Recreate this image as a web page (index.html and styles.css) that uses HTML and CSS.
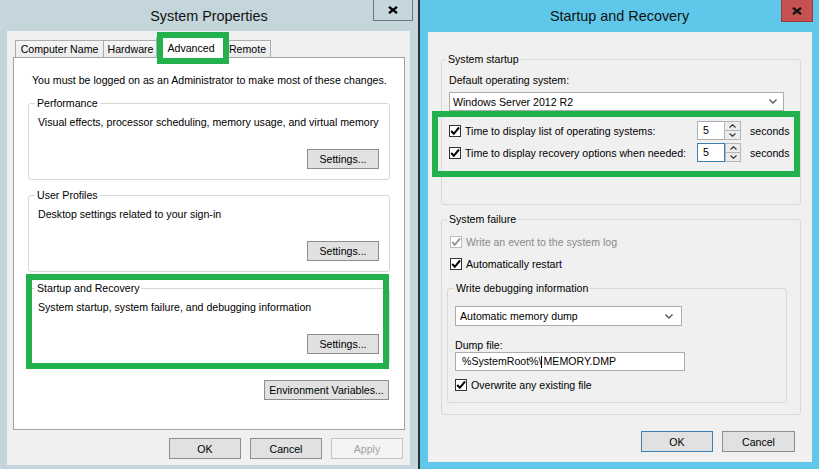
FILE: index.html
```html
<!DOCTYPE html>
<html lang="en">
<head>
<meta charset="utf-8">
<title>System Properties - Startup and Recovery</title>
<link rel="stylesheet" href="styles.css">
</head>
<body>
<div class="desktop">
  <section class="win win-sys">
    <header class="titlebar">
      <span class="title">System Properties</span>
      <span class="close close-sys"><svg width="10" height="8" viewBox="0 0 10 8"><path d="M1 0.8 L9 7.2 M9 0.8 L1 7.2" stroke="#000" stroke-width="2.2" fill="none"/></svg></span>
    </header>
    <div class="client client-sys">
      <div class="tabs">
        <span class="tab tab-cn">Computer Name</span>
        <span class="tab tab-hw">Hardware</span>
        <span class="tab tab-active">Advanced</span>
        <span class="tab tab-rm">Remote</span>
        <span class="hl hl-tab"></span>
      </div>
      <div class="panel">
        <p class="note">You must be logged on as an Administrator to make most of these changes.</p>
        <fieldset class="group">
          <legend>Performance</legend>
          <p class="desc">Visual effects, processor scheduling, memory usage, and virtual memory</p>
          <button class="btn btn-settings">Settings...</button>
        </fieldset>
        <fieldset class="group group-up">
          <legend>User Profiles</legend>
          <p class="desc">Desktop settings related to your sign-in</p>
          <button class="btn btn-settings">Settings...</button>
        </fieldset>
        <fieldset class="group group-sr">
          <legend>Startup and Recovery</legend>
          <p class="desc">System startup, system failure, and debugging information</p>
          <button class="btn btn-settings">Settings...</button>
        </fieldset>
        <button class="btn btn-env">Environment Variables...</button>
        <span class="hl hl-sr"></span>
      </div>
      <div class="actions actions-sys">
        <button class="btn">OK</button>
        <button class="btn">Cancel</button>
        <button class="btn" disabled>Apply</button>
      </div>
    </div>
  </section>

  <section class="win win-sr">
    <header class="titlebar titlebar-sr">
      <span class="title">Startup and Recovery</span>
      <span class="close close-sr"><svg width="10" height="8" viewBox="0 0 10 8"><path d="M1 0.8 L9 7.2 M9 0.8 L1 7.2" stroke="#111" stroke-width="2.2" fill="none"/></svg></span>
    </header>
    <div class="client client-sr">
      <fieldset class="group group-startup">
        <legend>System startup</legend>
        <div class="field-label">Default operating system:</div>
        <div class="select select-os"><span>Windows Server 2012 R2</span><svg class="chev" width="8" height="5" viewBox="0 0 8 5"><path d="M0.5 0.5 L4 4 L7.5 0.5" stroke="#555" stroke-width="1.4" fill="none"/></svg></div>
        <div class="spin-row spin-row-first">
          <span class="check"><span class="cb"><svg width="10" height="10" viewBox="0 0 10 10"><path d="M1.2 5 L3.8 7.8 L9 1.5" stroke="#000" stroke-width="2" fill="none"/></svg></span>Time to display list of operating systems:</span>
          <span class="spin"><span class="spin-input">5</span><span class="spin-btns"><span class="spin-btn"><svg width="7" height="4" viewBox="0 0 7 4"><path d="M0.5 3.5 L3.5 0.8 L6.5 3.5" stroke="#333" stroke-width="1.1" fill="none"/></svg></span><span class="spin-btn"><svg width="7" height="4" viewBox="0 0 7 4"><path d="M0.5 0.5 L3.5 3.2 L6.5 0.5" stroke="#333" stroke-width="1.1" fill="none"/></svg></span></span></span>
          <span class="unit">seconds</span>
        </div>
        <div class="spin-row">
          <span class="check"><span class="cb"><svg width="10" height="10" viewBox="0 0 10 10"><path d="M1.2 5 L3.8 7.8 L9 1.5" stroke="#000" stroke-width="2" fill="none"/></svg></span>Time to display recovery options when needed:</span>
          <span class="spin spin-focus"><span class="spin-input">5</span><span class="spin-btns"><span class="spin-btn"><svg width="7" height="4" viewBox="0 0 7 4"><path d="M0.5 3.5 L3.5 0.8 L6.5 3.5" stroke="#333" stroke-width="1.1" fill="none"/></svg></span><span class="spin-btn"><svg width="7" height="4" viewBox="0 0 7 4"><path d="M0.5 0.5 L3.5 3.2 L6.5 0.5" stroke="#333" stroke-width="1.1" fill="none"/></svg></span></span></span>
          <span class="unit">seconds</span>
        </div>
      </fieldset>

      <fieldset class="group group-failure">
        <legend>System failure</legend>
        <span class="check check-row disabled"><span class="cb"><svg width="10" height="10" viewBox="0 0 10 10"><path d="M1.2 5 L3.8 7.8 L9 1.5" stroke="#9a9a9a" stroke-width="2" fill="none"/></svg></span>Write an event to the system log</span>
        <span class="check check-row"><span class="cb"><svg width="10" height="10" viewBox="0 0 10 10"><path d="M1.2 5 L3.8 7.8 L9 1.5" stroke="#000" stroke-width="2" fill="none"/></svg></span>Automatically restart</span>
        <fieldset class="group group-debug">
          <legend>Write debugging information</legend>
          <div class="select select-dump"><span>Automatic memory dump</span><svg class="chev" width="8" height="5" viewBox="0 0 8 5"><path d="M0.5 0.5 L4 4 L7.5 0.5" stroke="#555" stroke-width="1.4" fill="none"/></svg></div>
          <div class="field-label field-dump">Dump file:</div>
          <div class="textbox">%SystemRoot%\<span class="caret"></span>MEMORY.DMP</div>
          <span class="check check-over"><span class="cb"><svg width="10" height="10" viewBox="0 0 10 10"><path d="M1.2 5 L3.8 7.8 L9 1.5" stroke="#000" stroke-width="2" fill="none"/></svg></span>Overwrite any existing file</span>
        </fieldset>
      </fieldset>

      <div class="actions actions-sr">
        <button class="btn btn-default">OK</button>
        <button class="btn btn-cancel">Cancel</button>
      </div>
      <span class="hl hl-startup"></span>
    </div>
  </section>
</div>
</body>
</html>
```

FILE: styles.css
```css
* { box-sizing: border-box; }
html, body { margin: 0; padding: 0; }
body {
  width: 819px;
  height: 469px;
  overflow: hidden;
  font-family: "Liberation Sans", Arial, sans-serif;
  font-size: 10.6px;
  line-height: 14px;
  color: #000;
  background: #c4d6dc;
}
p { margin: 0; }

.desktop { display: flex; width: 819px; height: 469px; }

.win { position: relative; display: flex; flex-direction: column; height: 469px; }
.win-sys { width: 418px; background: #c4d6dc; }
.win-sr { width: 401px; background: #5fc8ea; border-left: 2px solid #2a3236; }

.titlebar {
  height: 31px;
  flex: none;
  display: flex;
  align-items: center;
  justify-content: center;
  font-size: 14.4px;
  color: #111;
}
.titlebar-sr { height: 32px; }

.close {
  position: absolute;
  top: 0;
  display: flex;
  align-items: center;
  justify-content: center;
  border: 1px solid #66777e;
  border-top: none;
}
.close-sys { right: 5px; width: 40px; height: 21px; }
.close-sr { right: 6px; width: 32px; height: 22px; background: #c75050; border-color: #9b3a3a; }

.client { position: relative; background: #f0f0f0; flex: 1; display: flex; flex-direction: column; }
.client-sys { margin: 0 8px 4px 7px; }
.client-sr { margin: 0 7px 7px 8px; padding: 20px 11px 0 13px; }

/* tabs */
.tabs {
  position: relative;
  height: 26px;
  flex: none;
  display: flex;
  align-items: flex-end;
  padding-left: 8px;
}
.tab {
  height: 17px;
  line-height: 17px;
  text-align: center;
  border: 1px solid #acacac;
  border-bottom: none;
  background: linear-gradient(#f5f5f5, #ebebeb);
}
.tab-cn { width: 89px; }
.tab-hw { width: 55px; margin-left: -1px; }
.tab-active {
  position: relative;
  z-index: 2;
  width: 70px;
  height: 21px;
  line-height: 20px;
  margin: 0 -2px -1px -2px;
  background: #fff;
}
.tab-rm { width: 47px; }

/* green annotation frames */
.hl { position: absolute; border: 6px solid #22b14c; z-index: 5; }
.hl-tab { left: 150px; top: 1px; width: 72px; height: 32px; }
.hl-sr { left: 12px; top: 216px; width: 363px; height: 95px; }
.hl-startup { left: 4px; top: 79px; width: 368px; height: 66px; }

.panel {
  position: relative;
  z-index: 1;
  margin-left: 6px;
  width: 392px;
  height: 373px;
  flex: none;
  background: #fff;
  border: 1px solid #a3a3a3;
  padding: 15px 14px 0 14px;
  display: flex;
  flex-direction: column;
}
.note { margin: 0 0 9px 4px; }

.group {
  margin: 0;
  min-width: 0;
  border: 1px solid #d8d8d8;
  border-radius: 3px;
  padding: 5px 10px 10px 9px;
}
.group legend {
  padding: 0 2px;
  margin-left: -3px;
  line-height: 14px;
}
.group-up { margin-top: 8px; }
.group-sr { margin-top: 9px; }

.btn {
  font: inherit;
  color: #000;
  height: 20px;
  padding: 0;
  background: #e1e1e1;
  border: 1px solid #8e8e8e;
  border-radius: 0;
}
.btn-settings { display: block; width: 72px; margin: 20px 0 0 auto; }
.btn-env { align-self: flex-end; width: 125px; margin: 15px 1px 0 0; }
.btn:disabled { background: #f4f4f4; border-color: #c3c3c3; color: #a3a3a3; }

.actions { display: flex; justify-content: flex-end; gap: 9px; }
.actions .btn { width: 72px; }
.actions-sys { margin-top: 8px; padding-right: 7px; }
.actions-sys .btn { height: 21px; }
.actions-sr { margin-top: 16px; margin-right: 6px; }
.actions-sr .btn { height: 21px; }
.actions-sr .btn-cancel { width: 73px; }
.btn-default { border-color: #3c7fb1; }

/* right dialog */
.group-startup { padding: 7px 16px 42px 7px; }
.group-failure { margin-top: 7px; padding: 5px 8px 11px 8px; }
.group-debug { margin: 6px 0 0 -3px; width: 340px; padding: 11px 7px 8px 7px; }
.group-debug legend { margin-left: -1px; }

.select {
  display: flex;
  align-items: center;
  justify-content: space-between;
  background: #fff;
  border: 1px solid #acacac;
  padding: 0 6px 0 3px;
}
.select-os { width: 335px; height: 19px; margin-top: 5px; }
.select-dump { width: 227px; height: 20px; padding-right: 8px; padding-left: 4px; }

.spin-row {
  display: grid;
  grid-template-columns: 248px 44px auto;
  align-items: center;
  height: 19px;
  margin-top: 3px;
}
.spin-row-first { margin-top: 10px; }
.spin { display: flex; height: 19px; width: 44px; }
.unit { margin-left: 9px; }
.spin-input {
  width: 27px;
  height: 19px;
  background: #fff;
  border: 1px solid #abadb3;
  border-right: none;
  padding-left: 5px;
  line-height: 17px;
}
.spin-focus .spin-input { border-color: #3c7fb1; border-right: 1px solid #3c7fb1; width: 28px; }
.spin-btns { display: flex; flex-direction: column; width: 17px; height: 19px; }
.spin-focus .spin-btns { width: 16px; }
.spin-btn {
  flex: 1;
  display: flex;
  align-items: center;
  justify-content: center;
  background: #ececec;
  border: 1px solid #b5b5b5;
}
.spin-btn + .spin-btn { border-top: none; }

.check { display: flex; align-items: center; gap: 4px; }
.cb {
  width: 12px;
  height: 12px;
  flex: none;
  background: #fff;
  border: 1px solid #333;
  display: flex;
  align-items: center;
  justify-content: center;
}
.check-row { height: 22px; }
.disabled { color: #8a8a8a; }
.disabled .cb { border-color: #bcbcbc; }

.field-dump { margin-top: 12px; }
.textbox {
  width: 230px;
  height: 19px;
  background: #fff;
  border: 1px solid #acacac;
  padding-left: 6px;
  line-height: 17px;
  display: flex;
  align-items: center;
}
.caret { display: inline-block; width: 1px; height: 12px; background: #000; margin: 0 1px 0 0; }
.check-over { height: 18px; margin-top: 5px; }
```
